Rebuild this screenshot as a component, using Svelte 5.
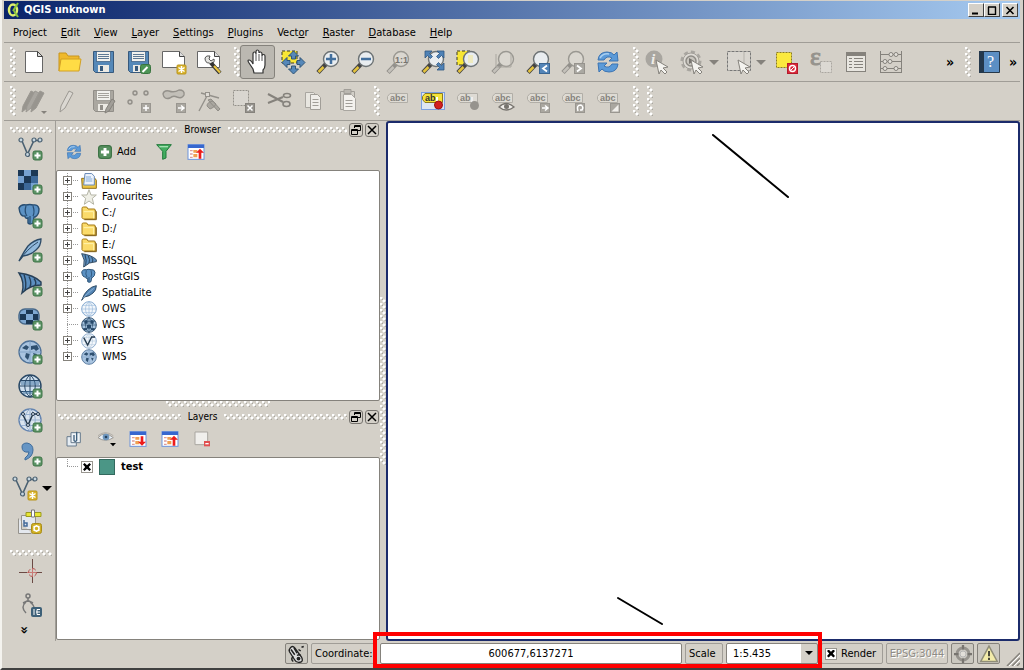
<script lang="ts">
  // Main window: title bar, menu, two toolbar rows, layer toolbar on the left,
  // Browser and Layers docks, map canvas and status bar.

  let render = $state(true);
  let testVisible = $state(true);
  let scale = $state('1:5.435');
  let coordinate = $state('600677,6137271');

  // [before, accelerator, after]
  const menus = [
    ['Pro', 'j', 'ect'],
    ['', 'E', 'dit'],
    ['', 'V', 'iew'],
    ['', 'L', 'ayer'],
    ['', 'S', 'ettings'],
    ['', 'P', 'lugins'],
    ['Vect', 'o', 'r'],
    ['', 'R', 'aster'],
    ['', 'D', 'atabase'],
    ['', 'H', 'elp'],
  ];

  const fileTools = ['new', 'open', 'save', 'save as', 'new composer', 'composer manager'];
  const navTools = [
    'pan', 'pan to selection', 'zoom in', 'zoom out', 'zoom native', 'zoom full',
    'zoom to selection', 'zoom to layer', 'zoom last', 'zoom next', 'refresh',
  ];
  const editTools = [
    'current edits', 'toggle editing', 'save edits', 'add feature', 'move feature',
    'node tool', 'delete selected', 'cut', 'copy', 'paste',
  ];
  const labelTools = [
    'labeling', 'pin labels', 'highlight pinned', 'show labels',
    'move label', 'rotate label', 'change label',
  ];
  const layerTools = [
    'add vector', 'add raster', 'add postgis', 'add spatialite', 'add mssql', 'add oracle raster',
    'add wms', 'add wcs', 'add wfs', 'add delimited text', 'new shapefile', 'layer from clipboard',
  ];

  const sources = [
    { label: 'Home', icon: 'home' },
    { label: 'Favourites', icon: 'star' },
    { label: 'C:/', icon: 'folder' },
    { label: 'D:/', icon: 'folder' },
    { label: 'E:/', icon: 'folder' },
    { label: 'MSSQL', icon: 'mssql' },
    { label: 'PostGIS', icon: 'postgis' },
    { label: 'SpatiaLite', icon: 'feather' },
    { label: 'OWS', icon: 'ows' },
    { label: 'WCS', icon: 'wcs', leaf: true },
    { label: 'WFS', icon: 'wfs' },
    { label: 'WMS', icon: 'wms' },
  ];

  // Shared icon parts, all on a 24×24 grid.
  const plus = '<rect x="15" y="15" width="9" height="9" rx="2" fill="#5b9364" stroke="#3f7548"/><path d="M19.5 16.5v6M16.5 19.5h6" stroke="#fff" stroke-width="2"/>';
  const spark = '<rect x="15" y="15" width="9" height="9" rx="1" fill="#dbb52c" stroke="#b8941c"/><path d="M19.5 16v7M16.5 17.5l6 4M16.5 21.5l6-4" stroke="#fff" stroke-width="1.5"/>';
  const lens = (inner: string, off = false) => `
    <path d="M10 14l-8 8.5" stroke="${off ? '#92908b' : '#444'}" stroke-width="4.5"/>
    <path d="M7.5 17l-5 5" stroke="${off ? '#c4c1ba' : '#e5c33c'}" stroke-width="2.5"/>
    <circle cx="15" cy="9" r="7.5" fill="${off ? '#dad7d0' : '#e9edf0'}" stroke="${off ? '#9a9892' : '#6d7375'}" stroke-width="1.4"/>${inner}`;
  const tag = (inner: string, fill = '#dedbd4', ink = '#85827c', word = 'abc') => `
    <path d="M4 4.5h17.5v9H4l-2.500-3v-3z" fill="${fill}" stroke="${ink === '#333' ? '#8a7a20' : '#b1aea7'}"/>
    <text x="4" y="12" font-family="Liberation Sans, sans-serif" font-size="9" font-weight="bold" fill="${ink}">${word}</text>${inner}`;
  const graySquare = '<rect x="14.5" y="14.5" width="9" height="9" fill="#aaa7a0" stroke="#999690"/>';
  const floppy = (body: string, edge: string) => `
    <path d="M1.5 1.5h20v21h-18l-2-2z" fill="${body}" stroke="${edge}"/>
    <rect x="4.5" y="1.5" width="14" height="10" fill="#f2f2ee" stroke="${edge}" stroke-width=".7"/>
    <path d="M6 4.5h11M6 6.5h11M6 8.5h11" stroke="${edge}" stroke-width=".8"/>
    <rect x="6" y="15" width="11" height="7" fill="#eceae4"/><rect x="8" y="16" width="3" height="5" fill="${edge}"/>`;
  const globe = (fill: string, edge: string, lines: string) => `
    <circle cx="12" cy="12" r="11" fill="${fill}" stroke="${edge}" stroke-width="1.4"/>
    <path d="M1 12h22M3 6.5h18M3 17.5h18M12 1v22M12 1C5 6 5 18 12 23M12 1c7 5 7 17 0 22" fill="none" stroke="${lines}"/>`;
  const nodes = '<path d="M4 5l5.5 13L16 4.5h6" fill="none" stroke="#4b6172" stroke-width="1.6"/><g fill="#c7d6e0" stroke="#4b6172" stroke-width="1.2"><circle cx="3" cy="4" r="2"/><circle cx="9.5" cy="18.5" r="2"/><circle cx="16" cy="4" r="2"/><circle cx="22" cy="4" r="2"/></g>';
  const elephant = '<path d="M1 4q2-4 7-3 4-1 7 0 5-1 6 4 0 6-4 8h-1l-1 6q-3 2-5 0v-5q-3 1-3-2-5 1-6-8z" fill="#5c92c4" stroke="#274d71" stroke-width="1.4"/><path d="M8 2q-2 6 1 10M15 2q2 6 0 10M12 12v7" fill="none" stroke="#274d71" stroke-width="1.2"/>';
  const sail = '<path d="M1 1q15 2 22 9v3q-11 0-19 8 3-11-3-20z" fill="#5c8fc0" stroke="#263f57" stroke-width="1.4"/><path d="M6 2.5q3 9 1 16M11 4.5q3 6 1 10.5M16 6.500q3 4 1 7" fill="none" stroke="#263f57" stroke-width="1.4"/>';
  const feather = '<path d="M1 23Q5 15 10 8 16 2 23 1q0 7-5 11-5 5-13 6z" fill="#92b9dc" stroke="#2c4a66" stroke-width="1.3"/><path d="M1 23Q9 11 20 4" fill="none" stroke="#2c4a66"/>';
  const continents = '<circle cx="12" cy="12" r="11" fill="#a9c4e0" stroke="#4f7298" stroke-width="1.3"/><path d="M4 8l4-3 3 2-2 3-3-1zM13 6l6-1 2 4-3 2-2-2-3 1zM8 13l4 1-2 6-3-3zM15 13l4 1-2 4z" fill="#2f5070"/><path d="M12 1v22M1 12h22" stroke="#7a9cc0" stroke-width=".8"/>';
  const pencil = (x: number, fill: string) => `<path d="M${x} 17L${x + 8} 2l4 2-8 15-5 4z" fill="${fill}" stroke="#9b9892"/>`;
  const pointer = '<path d="M11 10l12 7-5 1 4 4-2 2-4-4-2 4z" fill="#f4f3ef" stroke="#85827c"/>';
  const table = (arrow: string) => `
    <rect x="0" y="1" width="24" height="22" fill="#fff" stroke="#6c93dc" stroke-width="1.5"/><rect x="0" y="1" width="24" height="5" fill="#3767cf"/>
    <path d="M3 10h4M3 15h4M3 20h4" stroke="#df9c9c" stroke-width="2"/><path d="M8 9h6v4H8zM8 15h6v5H8z" fill="#f0a052"/>${arrow}`;

  const icons: Record<string, string> = {
    new: '<path d="M3.5 1.5h12l5 5v16h-17z" fill="#fff" stroke="#666"/><path d="M15.5 1.5v5h5z" fill="#ddd" stroke="#444"/>',
    open: '<path d="M2 21V3h7l2 3h11v3" fill="#efb92c" stroke="#c8951c"/><path d="M2 21L4 9h20l-2 12z" fill="#ffdc45" stroke="#d2a024"/>',
    save: floppy('#5588b8', '#37597c'),
    'save as': floppy('#5588b8', '#37597c') + '<rect x="13.5" y="14.5" width="10" height="9" rx="2" fill="#4d9455" stroke="#39743f"/><path d="M15.5 22l5-5" stroke="#fff" stroke-width="2"/>',
    'new composer': '<path d="M.5 1.5h17l5 5v11H.5z" fill="#fff" stroke="#666"/><path d="M17.5 1.5v5h5" fill="#ddd" stroke="#444"/>' + spark,
    'composer manager': '<path d="M.5 1.5h17l5 5v11H.5z" fill="#fff" stroke="#666"/><path d="M17.5 1.5v5h5" fill="#ddd" stroke="#444"/><path d="M8 8q1-3 5-2l-1 3 2 2 3-2q1 4-3 5l-2-1q-4 0-4-5z" fill="#e5e5e2" stroke="#555"/><path d="M14 13l9 10" stroke="#333" stroke-width="4"/><path d="M17 16l6 6.5" stroke="#e9c541" stroke-width="2.2"/>',
    pan: '<path d="M8 23l-1-4-4-6q-2-3 0-3t4 4V4q0-2 1.5-2T10 4V2q0-2 1.5-2T13 2v1q0-1 1.5-1T16 4v2q0-1.5 1.5-1.5T19 6v9q0 3-2 5v3z" fill="#fff" stroke="#333" stroke-width="1.2"/><path d="M10 4v7M13 4v7M16 6v5" stroke="#555"/>',
    'pan to selection': '<path d="M1 1h15v12H1z" fill="#f8e635" stroke="#3a3a20" stroke-dasharray="3 2"/><path d="M12.5 1l5 5h-3v3h-4V6h-3zM12.5 24l5-5h-3v-3h-4v3h-3zM1 12.5l5-5v3h3v4H6v3zM24 12.5l-5-5v3h-3v4h3v3z" fill="#5688b9" stroke="#315577"/>',
    'zoom in': lens('<path d="M15 4v10M10 9h10" stroke="#426f9d" stroke-width="2.5"/>'),
    'zoom out': lens('<path d="M10 9h10" stroke="#426f9d" stroke-width="2.5"/>'),
    'zoom native': lens('<text x="9" y="12.500" font-family="Liberation Sans, sans-serif" font-size="9" font-weight="bold" fill="#77746f">1:1</text>', true),
    'zoom full': lens('<path d="M4 1h7L8.5 3.5l3 3-2 2-3-3L4 8zM23 1h-7l2.5 2.5-3 3 2 2 3-3L23 8zM23 20h-7l2.5-2.5-3-3 2-2 3 3L23 13z" fill="#4f82b6" stroke="#2f5680" stroke-width=".8"/>'),
    'zoom to selection': '<path d="M1 1h13v14H1z" fill="#f8e635" stroke="#3a3a20" stroke-dasharray="3 2"/>' + lens('<path d="M12 5h5v8h-5z" fill="#eeeac0"/>'),
    'zoom to layer': lens('<path d="M5 4v13h15V4" fill="none" stroke="#aaa7a0"/>', true),
    'zoom last': lens('<rect x="13.5" y="13.5" width="10" height="10" fill="#5385b8" stroke="#3a6591"/><path d="M21 15.5l-4 3 4 3" fill="none" stroke="#fff" stroke-width="1.8"/>'),
    'zoom next': lens('<rect x="13.5" y="13.5" width="10" height="10" fill="#aaa8a2" stroke="#96938d"/><path d="M16 15.5l4 3-4 3" fill="none" stroke="#fff" stroke-width="1.8"/>', true),
    refresh: '<path d="M2 10q1-8 9-8 5 0 7 3l3-3 1 9h-9l3-3q-5-3-8 2zM22 14q-1 8-9 8-5 0-7-3l-3 3-1-9h9l-3 3q5 3 8-2z" fill="#5b9ad8" stroke="#3d74b2"/><path d="M4 8q3-5 9-4" fill="none" stroke="#a9cff0" stroke-width="1.5"/>',
    identify: '<circle cx="9" cy="9" r="8.5" fill="#a9a6a0"/><text x="6" y="14" font-family="Liberation Serif, serif" font-size="15" font-style="italic" font-weight="bold" fill="#efede8">i</text>' + pointer,
    action: '<circle cx="11" cy="11" r="9" fill="none" stroke="#a9a6a0" stroke-width="3" stroke-dasharray="4 3"/><circle cx="11" cy="11" r="8" fill="#dedbd5" stroke="#a19e98"/><circle cx="11" cy="11" r="5" fill="#c8c5be" stroke="#8f8c86" stroke-width="1.5"/><path d="M9 8l5 3-5 3z" fill="#77746f"/>' + pointer,
    select: '<path d="M.5 1.5h23v19H.5z" fill="#d9d6d0" stroke="#777" stroke-dasharray="3 1"/><path d="M17 2v18" stroke="#b5b2ab"/>' + pointer,
    deselect: '<path d="M2.5 2.5h15v15h-15z" fill="#fbe93e" stroke="#8a7c20" stroke-dasharray="2 1"/><rect x="13.5" y="13.5" width="10" height="10" fill="#d9283a" stroke="#b51a2b"/><circle cx="18.5" cy="18.5" r="3" fill="none" stroke="#fff" stroke-width="1.4"/><path d="M16.5 20.5l4-4" stroke="#fff"/>',
    expression: '<text x="1" y="15" font-family="Liberation Serif, serif" font-size="26" fill="#96938d" stroke="#96938d">ε</text><path d="M11.5 11.5h11v11h-11z" fill="#dcd9d3" stroke="#aaa7a0" stroke-dasharray="2 1"/>',
    'attribute table': '<rect x="2.5" y="2.5" width="19" height="19" fill="#e8e6e0" stroke="#85827c"/><path d="M2 4.5h20" stroke="#85827c" stroke-width="3"/><path d="M5 8.5h3M10 8.5h9M5 11.5h3M10 11.5h9M5 14.5h3M10 14.5h9M5 17.5h3M10 17.5h9" stroke="#85827c"/>',
    'field calculator': '<path d="M1.5 1v22M22.5 1v22M1 4.5h22M1 11.5h22M1 18.5h22M1 22.5h22" stroke="#85827c"/><g fill="#e4e1db" stroke="#85827c"><circle cx="12" cy="4.5" r="2"/><circle cx="17" cy="4.5" r="2"/><circle cx="6" cy="11.5" r="2"/><circle cx="11" cy="11.5" r="2"/><circle cx="6" cy="18.5" r="2"/><circle cx="17" cy="18.5" r="2"/></g>',
    help: '<path d="M2.5 1.5h20v21h-20z" fill="#5c8fc4" stroke="#26384a"/><path d="M2 1h5v22H2z" fill="#24384c"/><text x="10" y="17" font-family="Liberation Serif, serif" font-size="16" fill="#fff">?</text>',
    'current edits': pencil(1, '#98958f') + pencil(5, '#a9a6a0') + pencil(10, '#98958f') + '<path d="M19 22h6l-3 3z" fill="#85827c"/>',
    'toggle editing': pencil(4, '#dbd8d2'),
    'save edits': floppy('#aaa7a0', '#918e88') + '<path d="M14 20l6-10 3 2-6 10-4 2z" fill="#a19e98" stroke="#85827c"/>',
    'add feature': '<g fill="#cbc8c1" stroke="#918e88" stroke-width="1.4"><circle cx="8" cy="4" r="2"/><circle cx="19" cy="4" r="2"/><circle cx="3" cy="13" r="2"/></g>' + graySquare + '<path d="M19 16v6M16 19h6" stroke="#fff" stroke-width="1.5"/>',
    'move feature': '<path d="M1 5q1-4 6-3 5 2 10-1 6 0 5 5-2 4-7 2-4-2-7 1-6 2-7-4z" fill="#c2bfb8" stroke="#94918b" stroke-width="1.4"/>' + graySquare + '<path d="M16 19h5M19 16.5l3 2.5-3 2.5" fill="none" stroke="#fff" stroke-width="1.5"/>',
    'node tool': '<path d="M2 22L11 5M4 4l18 5" stroke="#94918b" stroke-width="1.4"/><rect x="8.5" y="3.5" width="4" height="4" fill="#dedbd5" stroke="#94918b"/><path d="M11 11l3-1 9 10-2 2zM10 17q0-4 6-5l3 3q-2 4-6 5z" fill="#aaa7a0" stroke="#918e88"/>',
    'delete selected': '<path d="M1.5 1.5h15v15h-15z" fill="#d9d6d0" stroke="#94918b" stroke-dasharray="2 1"/><rect x="13.5" y="14.5" width="9" height="9" fill="#96938d" stroke="#85827c"/><path d="M15.5 16.5l5 5M20.5 16.5l-5 5" stroke="#fff" stroke-width="1.5"/>',
    cut: '<path d="M1 5l15 8M1 14l15-6" stroke="#85827c" stroke-width="2"/><g fill="none" stroke="#85827c" stroke-width="1.6"><ellipse cx="20" cy="6.5" rx="3.500" ry="2"/><ellipse cx="19.500" cy="15" rx="3.500" ry="2.500"/></g>',
    copy: '<path d="M3.5 3.5h8l3 3v12h-11z" fill="#e8e6e0" stroke="#a9a6a0"/><path d="M8.500 5.5h7l3 3v12h-10z" fill="#f0eeea" stroke="#a19e98"/><path d="M10.5 10.5h6M10.5 13.5h6M10.5 16.5h6" stroke="#a19e98"/>',
    paste: '<path d="M3.5 2.5h14v18h-14z" fill="#d2cfc8" stroke="#a19e98"/><path d="M7 .5h7v4H7z" fill="#bbb8b1" stroke="#a19e98"/><path d="M6.5 5.5h8l4 4v12h-12z" fill="#f4f2ee" stroke="#a9a6a0"/><path d="M8.5 11.5h7M8.5 14.5h7M8.5 17.5h7" stroke="#a19e98"/>',
    labeling: tag(''),
    'pin labels': '<rect x=".5" y="3.5" width="23" height="17" fill="#dde5f2" stroke="#7b9fe0"/>' + tag('<path d="M16 8v8" stroke="#fff" stroke-width="2"/><circle cx="17.5" cy="16" r="4" fill="#d32020" stroke="#9c1010"/>', '#f6e338', '#333', 'ab'),
    'highlight pinned': tag('<path d="M16 8v8" stroke="#eee" stroke-width="2"/><circle cx="18.5" cy="16.5" r="4.5" fill="#96938d"/>', '#dedbd4', '#85827c', 'ab'),
    'show labels': tag('<path d="M8 18q7-7 15 0-8 6-15 0z" fill="#f0eeea" stroke="#77746f" stroke-width="1.300"/><circle cx="15.5" cy="17.500" r="2.500" fill="#77746f"/>'),
    'move label': tag(graySquare + '<path d="M16 19h5M19 16.5l3 2.5-3 2.5" fill="none" stroke="#fff" stroke-width="1.5"/>'),
    'rotate label': tag(graySquare + '<path d="M17 22q-2-6 3-6 3 2 1 5h-2" fill="none" stroke="#fff" stroke-width="1.5"/>'),
    'change label': tag(graySquare + '<path d="M15.5 22.5l7-7v7z" fill="#f0eeea"/>'),
    'add vector': nodes + plus,
    'add raster': '<path d="M0 0h20v20H0z" fill="#77a2d1"/><path d="M0 0h6v6H0zM13 0h7v6h-7zM6 6h7v7H6zM0 13h6v7H0z" fill="#1c3855"/><path d="M13 6h7v7h-7zM6 13h7v7H6z" fill="#3d6999"/>' + plus,
    'add postgis': elephant + plus,
    'add spatialite': feather + plus,
    'add mssql': sail + plus,
    'add oracle raster': '<rect x="1" y="3" width="20" height="15" rx="6" fill="#7fa8d2" stroke="#49698a" stroke-width="1.500"/><path d="M8 4h7v4H8zM2 8h6v6H2zM15 8h5v6h-5zM8 14h7v4H8z" fill="#1c3855"/>' + plus,
    'add wms': continents + plus,
    'add wcs': globe('#cfe0ef', '#294866', '#294866') + '<path d="M3 7h18v4H3zM5 17h14v3H5z" fill="#42719e" opacity=".5"/>' + plus,
    'add wfs': globe('#dae4ee', '#6585b0', '#98b1d1') + '<path d="M5 7l5 10 5-11h5" fill="none" stroke="#24394d" stroke-width="1.5"/><g fill="#dae4ee" stroke="#24394d"><circle cx="5" cy="6" r="1.5"/><circle cx="10" cy="17" r="1.5"/><circle cx="15" cy="6" r="1.5"/><circle cx="20" cy="6" r="1.500"/></g>' + plus,
    'add delimited text': '<path d="M4 5q0-4 5-4 6 1 6 7 0 7-8 10v-2q4-3 4-6-7 1-7-5z" fill="#6695c4" stroke="#3f6c9b"/>' + plus,
    'new shapefile': '<path d="M-2 4l6.5 14L11 3.5h6" fill="none" stroke="#4b6172" stroke-width="1.6"/><g fill="#c7d6e0" stroke="#4b6172" stroke-width="1.2"><circle cx="-3" cy="3" r="2"/><circle cx="4.5" cy="18" r="2"/><circle cx="11" cy="3" r="2"/><circle cx="17" cy="3" r="2"/></g><g transform="translate(-5 0)">' + spark + '</g>',
    'layer from clipboard': '<path d="M.5 8.5v15h13M3.5 5.5h14v14h-14z" fill="#e4e8ee" stroke="#96938d"/><path d="M6 10v6h3v-3H6" fill="none" stroke="#466b9a" stroke-width="1.5"/><path d="M8 2.5h15v4H8z" fill="#e7e535" stroke="#9b9a20"/><path d="M13.5 0h3v7h-3z" fill="#fff" stroke="#777"/><rect x="13.5" y="13.5" width="10" height="10" rx="2" fill="#d1b024" stroke="#a88c18"/><path d="M18.5 15v7M15.500 16.500l6 4M15.500 20.500l6-4" stroke="#fff"/><circle cx="18.5" cy="18.500" r="2.5" fill="#d1b024" stroke="#fff" stroke-width="1.5"/>',
    crosshair: '<path d="M14.5 0v9M14.5 16v8M1 13.5h8M19 13.5h5" stroke="#6b4a44"/><path d="M9 13.5h10M14.5 9v9" stroke="#c97a76"/><circle cx="14.5" cy="13.5" r="4" fill="none" stroke="#b2504c" stroke-dasharray="4 2"/>',
    measure: '<circle cx="10" cy="3" r="2" fill="none" stroke="#777" stroke-width="1.5"/><path d="M10 5v4M5 10l4-2h2l4 2M8 9q-6 5 0 11M12 9q4 3 4 6" fill="none" stroke="#777" stroke-width="1.5"/><rect x="13" y="14" width="11" height="10" rx="2" fill="#3d6078"/><path d="M16 16v6M22 16.5h-3v5h3M18 19h4" fill="none" stroke="#fff"/>',
    'browse add': '<rect x="1" y="1" width="22" height="22" rx="5" fill="#57905f" stroke="#3e7346" stroke-width="2"/><path d="M12 5v14M5 12h14" stroke="#fff" stroke-width="5"/>',
    filter: '<path d="M1 1h22l-8 10v10l-5 2V11z" fill="#43ad61" stroke="#217a3b" stroke-width="1.5"/><path d="M5 4h13" stroke="#a6e1b3" stroke-width="2"/>',
    collapse: table('<path d="M18 7l6 6h-4v9h-4v-9h-4z" fill="#ed1b1b"/>'),
    expand: table('<path d="M18 22l6-6h-4V8h-4v8h-4z" fill="#ed1b1b"/>'),
    'add group': '<path d="M1.5 8.5v14h14V8.500z" fill="#e6edf3" stroke="#687b8d" stroke-width="1.500"/><path d="M7.5 2.5h14v15h-14z" fill="#eef3f7" stroke="#687b8d" stroke-width="1.500"/><path d="M12 6v8q2 3 4 0V1" fill="none" stroke="#41617e" stroke-width="2"/>',
    visibility: '<path d="M0 10q10-11 23 0-12 8-23 0z" fill="#e5eef7" stroke="#9d9a95" stroke-width="1.5"/><path d="M0 7q11-9 23 0" fill="none" stroke="#9d9a95"/><circle cx="12" cy="9" r="5" fill="#6e96bd"/><circle cx="12" cy="9" r="2" fill="#27435f"/><path d="M18 18h9l-4.5 5z" fill="#000"/>',
    remove: '<path d="M1.5 1.5h19v19h-19z" fill="#f0efec" stroke="#a9a6a0" stroke-width="1.5"/><path d="M15 15h9v8h-9z" fill="#e05050"/><path d="M17 19h5" stroke="#fff" stroke-width="2"/>',
    folder: '<path d="M1.5 5q0-2 2-2h5l2 3h9q2 0 2 2v13H3.5l-2-2z" fill="#fbdb6a" stroke="#a37915" stroke-width="1.5"/><path d="M4 10h15v10" fill="none" stroke="#fff3b0" stroke-width="1.5"/><path d="M21 8l2 2v12H5" fill="none" stroke="#7d5c10" stroke-width="1.5"/>',
    home: '<path d="M1 8h20l2 3v12H2z" fill="#efc641" stroke="#91701c" stroke-width="1.5"/><path d="M6 .8h10l4 4V18H4z" fill="#edf3fc" stroke="#698bb8" stroke-width="1.5"/><path d="M7 6h8M7 9h10M7 12h10" stroke="#83acd8" stroke-width="1.5"/>',
    star: '<path d="M12 1l3 8h8l-6 5 2 9-7-5-7 5 2-9-6-5h8z" fill="#efefe6" stroke="#b5b5a6" stroke-width="1.5"/>',
    mssql: sail,
    postgis: elephant,
    feather: '<path d="M1 23Q5 12 10 8 16 2 23 1q0 7-5 11-5 5-13 6z" fill="#5587b7" stroke="#2c4a66" stroke-width="1.5"/><path d="M3 20Q10 12 19 5" stroke="#a9c9e6" fill="none"/>',
    ows: globe('#f3f7fb', '#7ea5cd', '#9bbbdc'),
    wcs: globe('#a8c6e2', '#294866', '#294866') + '<path d="M5 5h5v5H5zM14 5h5v5h-5zM9 12h6v5H9zM4 17h5v3H4zM15 17h5v3h-5z" fill="#274869"/>',
    wfs: globe('#f3f7fb', '#8aa9cb', '#b6cbe0') + '<path d="M4 7l6 11 6-12h5" fill="none" stroke="#24394d" stroke-width="2"/>',
    wms: continents,
    mouse: '<path d="M3 4q3-4 6 0l9 12q3 6-2 7-5 1-7-3L2 9q-1-3 1-5z" fill="#ddd" stroke="#222" stroke-width="1.8"/><path d="M4 6l5 7M8 4l4 7M12 14q3-2 5 0M14 6l3 2M18 3l3-1M7 15q-4 4 0 7" fill="none" stroke="#222" stroke-width="2"/><circle cx="14" cy="18" r="2.5" fill="#222"/>',
    crs: '<circle cx="12" cy="12" r="8" fill="#d0cdc7" stroke="#96938d" stroke-width="4"/><path d="M12 0v6M12 18v6M0 12h6M18 12h6" stroke="#77746f" stroke-width="3"/><circle cx="12" cy="12" r="4" fill="#e2dfd9" stroke="#aaa"/>',
    warning: '<path d="M12 1.5L23 22H1z" fill="#f3ecaa" stroke="#8f8d78" stroke-width="2"/><path d="M12 8v7M12 17v3" stroke="#3f3f35" stroke-width="2.5"/>',
  };
</script>

<svelte:head>
  <title>QGIS unknown</title>
</svelte:head>

{#snippet icon(name: string, size = 24)}
  <svg class="icon" width={size} height={size} viewBox="0 0 24 24" aria-hidden="true">{@html icons[name]}</svg>
{/snippet}

{#snippet tool(name: string)}
  <button class="tool" class:pressed={name === 'pan'} aria-label={name}>{@render icon(name)}</button>
{/snippet}

{#snippet drop(label: string)}
  <button class="drop" aria-label={label}></button>
{/snippet}

{#snippet dockTitle(title: string)}
  <header class="dock-title">
    <span class="grip-h"></span>
    <h2>{title}</h2>
    <span class="grip-h"></span>
    <button aria-label="Float {title}">
      <svg width="10" height="10" viewBox="0 0 10 10"><path d="M3.5 3V.5h6v5H7M3 1.500h7M.5 4.500h6v5h-6zM0 5.500h7" fill="none" stroke="#000" /></svg>
    </button>
    <button aria-label="Close {title}">
      <svg width="10" height="10" viewBox="0 0 10 10"><path d="M1 1l8 8M9 1l-8 8" stroke="#000" stroke-width="1.500" /></svg>
    </button>
  </header>
{/snippet}

<div class="window">
  <header class="titlebar">
    <svg width="16" height="16" viewBox="0 0 16 16" aria-hidden="true">
      <ellipse cx="7" cy="8" rx="4" ry="5.500" fill="none" stroke="#dff06c" stroke-width="2.500" />
      <path d="M8 9l4 6M7 9l5-8" stroke="#8ac43c" stroke-width="2" />
    </svg>
    <h1>QGIS unknown</h1>
    <div class="caption-buttons">
      <button aria-label="Minimize"><svg width="10" height="9"><path d="M1 7.500h6" stroke="#000" stroke-width="2" /></svg></button>
      <button aria-label="Maximize"><svg width="10" height="9"><path d="M1 1h8M1.500 1v7.500h7V1" fill="none" stroke="#000" stroke-width="1.400" /></svg></button>
      <button class="close" aria-label="Close"><svg width="10" height="9"><path d="M1.500 1l7 7M8.500 1l-7 7" stroke="#000" stroke-width="1.600" /></svg></button>
    </div>
  </header>

  <nav class="menubar">
    {#each menus as [before, key, after]}
      <button>{before}<u>{key}</u>{after}</button>
    {/each}
  </nav>

  <div class="toolbar">
    <span class="grip-v"></span>
    {#each fileTools as name}{@render tool(name)}{/each}
    <span class="grip-v"></span>
    {#each navTools as name}{@render tool(name)}{/each}
    <span class="grip-v"></span>
    {@render tool('identify')}
    {@render tool('action')}
    {@render drop('Actions')}
    {@render tool('select')}
    {@render drop('Selection tools')}
    {@render tool('deselect')}
    {@render tool('expression')}
    {@render tool('attribute table')}
    {@render tool('field calculator')}
    <span class="spacer"></span>
    <button class="more" aria-label="More tools">»</button>
    <span class="grip-v"></span>
    {@render tool('help')}
    <button class="more" aria-label="More help">»</button>
  </div>

  <div class="toolbar">
    <span class="grip-v"></span>
    {#each editTools as name}{@render tool(name)}{/each}
    <span class="grip-v"></span>
    {#each labelTools as name}{@render tool(name)}{/each}
    <span class="grip-v"></span>
    <span class="grip-v"></span>
  </div>

  <main>
    <div class="side-tools">
      <span class="grip-h"></span>
      {#each layerTools as name}
        <div class="side-row">
          <button class="side" aria-label={name}>{@render icon(name)}</button>
          {#if name === 'new shapefile'}<button class="side-drop" aria-label="New layer menu"></button>{/if}
        </div>
      {/each}
      <span class="grip-h second"></span>
      <button class="side" aria-label="Coordinate capture">{@render icon('crosshair')}</button>
      <button class="side" aria-label="Measure">{@render icon('measure')}</button>
      <button class="more down" aria-label="More layer tools">»</button>
    </div>

    <div class="docks">
      <section class="dock browser">
        {@render dockTitle('Browser')}
        <div class="dock-tools">
          <button aria-label="Refresh">{@render icon('refresh', 16)}</button>
          <button class="add">{@render icon('browse add', 14)}Add</button>
          <button aria-label="Filter">{@render icon('filter', 16)}</button>
          <button aria-label="Collapse all">{@render icon('collapse', 16)}</button>
        </div>
        <ul class="tree">
          {#each sources as s}
            <li>
              <span class="branch">
                {#if !s.leaf}<button class="expander" aria-label="Expand {s.label}"></button>{/if}
              </span>
              {@render icon(s.icon, 16)}
              <span>{s.label}</span>
            </li>
          {/each}
        </ul>
      </section>

      <div class="splitter"><span class="grip-h"></span></div>

      <section class="dock layers">
        {@render dockTitle('Layers')}
        <div class="dock-tools">
          <button aria-label="Add group">{@render icon('add group', 16)}</button>
          <button aria-label="Manage visibility">{@render icon('visibility', 16)}</button>
          <button aria-label="Expand all">{@render icon('expand', 16)}</button>
          <button aria-label="Collapse all layers">{@render icon('collapse', 16)}</button>
          <button aria-label="Remove layer">{@render icon('remove', 16)}</button>
        </div>
        <ul class="tree layer-tree">
          <li>
            <span class="branch last"></span>
            <input id="layer-test" type="checkbox" bind:checked={testVisible} />
            <span class="swatch"></span>
            <label for="layer-test">test</label>
          </li>
        </ul>
      </section>
    </div>

    <div class="v-splitter"><span class="grip-v"></span></div>

    <section class="canvas" aria-label="Map canvas">
      <svg width="100%" height="100%">
        {#if render && testVisible}
          <g stroke="#000" stroke-width="2" stroke-linecap="round">
            <line x1="325" y1="12" x2="400" y2="74" />
            <line x1="230" y1="475" x2="274" y2="501" />
          </g>
        {/if}
      </svg>
    </section>
  </main>

  <footer class="status">
    <button class="panel square" aria-label="Toggle extents">{@render icon('mouse', 18)}</button>
    <label class="panel coord-label" for="coordinate">Coordinate:</label>
    <div class="highlighted">
      <input id="coordinate" type="text" bind:value={coordinate} />
      <label class="panel" for="scale">Scale</label>
      <span class="combo">
        <select id="scale" bind:value={scale}>
          <option>1:5.435</option>
          <option>1:10.000</option>
          <option>1:25.000</option>
        </select>
      </span>
    </div>
    <label class="panel render"><input type="checkbox" bind:checked={render} />Render</label>
    <button class="panel epsg">EPSG:3044</button>
    <button class="panel square" aria-label="CRS status">{@render icon('crs', 18)}</button>
    <button class="panel square" aria-label="Messages">{@render icon('warning', 18)}</button>
    <svg class="size-grip" width="14" height="14" aria-hidden="true">
      <path d="M1 14L14 1M6 14l8-8M11 14l3-3" stroke="#85827c" stroke-width="1.500" />
      <path d="M3 14L14 3M8 14l6-6" stroke="#fff" />
    </svg>
  </footer>
</div>

<style>
  :global(body) {
    margin: 0;
    background: #d4d0c8;
  }

  .window {
    display: flex;
    flex-direction: column;
    box-sizing: border-box;
    min-height: 100vh;
    padding: 1px 3px 0 2px;
    border-left: 2px solid #f4f3ef;
    border-right: 1px solid #404040;
    border-bottom: 2px solid #404040;
    background: #d4d0c8;
    color: #000;
    font-family: 'DejaVu Sans Condensed', Tahoma, 'Noto Sans', sans-serif;
    font-size: 11px;
    line-height: 16px;
  }

  button, input, select {
    box-sizing: border-box;
    margin: 0;
    padding: 0;
    border: 0;
    background: none;
    color: inherit;
    font: inherit;
  }
  .icon {
    display: block;
    flex: none;
    overflow: visible;
  }
  h1, h2 {
    margin: 0;
    font-size: inherit;
    font-weight: normal;
  }

  /* Title bar */
  .titlebar {
    display: flex;
    align-items: center;
    gap: 2px;
    height: 18px;
    padding: 0 2px;
    background: linear-gradient(90deg, #0a246a, #a6caf0);
    color: #fff;
  }
  .titlebar h1 {
    flex: 1;
    font-weight: bold;
  }
  .caption-buttons {
    display: flex;
  }
  .caption-buttons button {
    display: flex;
    align-items: center;
    justify-content: center;
    width: 16px;
    height: 14px;
    border: 1px solid;
    border-color: #fff #404040 #404040 #fff;
    background: #d4d0c8;
  }
  .caption-buttons .close {
    margin-left: 2px;
  }

  .menubar {
    display: flex;
    height: 23px;
    padding-left: 2px;
    border-bottom: 1px solid #a09d97;
  }
  .menubar button {
    padding: 4px 7px 0;
  }

  /* Toolbars */
  .toolbar {
    display: flex;
    align-items: center;
    height: 38px;
    border-bottom: 1px solid #a09d97;
  }
  .tool {
    display: flex;
    align-items: center;
    justify-content: center;
    flex: none;
    width: 35px;
    height: 34px;
  }
  .tool.pressed {
    border: 1px solid #85827c;
    border-radius: 3px;
    background: #bbb8b1;
  }
  .drop {
    width: 12px;
    height: 34px;
  }
  .drop::before, .side-drop::before {
    content: '';
    display: block;
    width: 0;
    border: 5px solid transparent;
    border-top-color: #85827c;
    border-bottom: 0;
  }
  .spacer {
    flex: 1;
  }
  .more {
    width: 14px;
    font-size: 14px;
    font-weight: bold;
  }
  .grip-v, .grip-h {
    flex: none;
    background-image:
      radial-gradient(circle at 1px 1px, #fff 1px, transparent 2px),
      radial-gradient(circle at 4px 4px, #fff 1px, transparent 2px),
      radial-gradient(circle at 2px 2px, #aaa79f 1px, transparent 1px),
      radial-gradient(circle at 5px 5px, #aaa79f 1px, transparent 1px);
    background-size: 6px 6px;
  }
  .grip-v {
    width: 6px;
    height: 30px;
    margin-left: 8px;
  }
  .grip-v:first-child {
    margin-left: 6px;
  }
  .grip-h {
    height: 6px;
  }

  main {
    display: flex;
    flex: 1;
  }

  /* Layer toolbar */
  .side-tools {
    display: flex;
    flex-direction: column;
    align-items: flex-start;
    width: 51px;
    border-right: 1px solid #a09d97;
  }
  .side-tools .grip-h {
    width: 42px;
    margin: 6px 0 -2px 6px;
  }
  .side-tools .second {
    margin-top: 11px;
  }
  .side-row {
    display: flex;
    align-items: center;
  }
  .side {
    display: flex;
    align-items: center;
    justify-content: center;
    width: 36px;
    height: 34px;
    margin-left: 8px;
  }
  .side-drop {
    width: 10px;
    margin-left: -6px;
  }
  .side-drop::before {
    border-top-color: #000;
  }
  .down {
    margin-left: 14px;
    transform: rotate(90deg);
  }

  /* Docks */
  .docks {
    display: flex;
    flex-direction: column;
    width: 324px;
    padding-bottom: 1px;
  }
  .dock {
    display: flex;
    flex-direction: column;
  }
  .browser {
    flex: 280;
  }
  .layers {
    flex: 232;
  }
  .dock-title {
    display: flex;
    align-items: center;
    gap: 2px;
    height: 15px;
    padding: 1px 1px 0 2px;
  }
  .dock-title .grip-h {
    flex: 1;
  }
  .dock-title h2 {
    padding: 0 5px;
    font-size: 10px;
  }
  .dock-title button {
    display: flex;
    align-items: center;
    justify-content: center;
    width: 14px;
    height: 14px;
    border: 1px solid #77746f;
    border-radius: 3px;
  }
  .dock-tools {
    display: flex;
    align-items: center;
    gap: 16px;
    height: 29px;
    padding: 0 0 4px 10px;
  }
  .dock-tools .add {
    display: flex;
    align-items: center;
    gap: 5px;
    margin-right: 4px;
  }

  .tree {
    flex: 1;
    margin: 0;
    padding: 2px 0 0 5px;
    border: 1px solid #85827c;
    border-radius: 2px;
    background: #fff;
    list-style: none;
  }
  .tree li {
    display: flex;
    align-items: center;
    height: 16px;
  }
  .tree li > .icon {
    margin-right: 5px;
  }
  /* dotted trunk with a stub towards the icon */
  .branch {
    display: flex;
    align-items: center;
    width: 19px;
    height: 16px;
    background:
      repeating-linear-gradient(180deg, #999 0 1px, transparent 1px 2px) 5px 0 / 1px 100% no-repeat,
      repeating-linear-gradient(90deg, #999 0 1px, transparent 1px 2px) 5px 7px / 11px 1px no-repeat;
  }
  .tree li:last-child .branch {
    background-size: 1px 8px, 11px 1px;
  }
  .expander {
    width: 9px;
    height: 9px;
    margin: 0 0 1px 1px;
    border: 1px solid #85827c;
    background:
      linear-gradient(#444, #444) center / 5px 1px no-repeat,
      linear-gradient(#444, #444) center / 1px 5px no-repeat,
      #fff;
  }

  input[type='checkbox'] {
    display: flex;
    flex: none;
    width: 12px;
    height: 12px;
    appearance: none;
    border: 1px solid #999690;
    background: #fff;
  }
  input[type='checkbox']:checked::before {
    content: '';
    flex: 1;
    margin: 1px;
    background: #000;
    clip-path: polygon(0 20%, 20% 0, 50% 28%, 80% 0, 100% 20%, 72% 50%, 100% 80%, 80% 100%, 50% 72%, 20% 100%, 0 80%, 28% 50%);
  }
  .layer-tree {
    padding-top: 0;
  }
  .layer-tree li {
    height: 18px;
    font-weight: bold;
  }
  .layer-tree .swatch {
    box-sizing: border-box;
    width: 16px;
    height: 16px;
    margin: 0 6px;
    border: 1px solid #33695e;
    background: #4b9686;
  }

  .splitter {
    display: flex;
    justify-content: center;
    height: 7px;
  }
  .splitter .grip-h {
    width: 104px;
  }
  .v-splitter {
    display: flex;
    align-items: center;
    width: 6px;
  }
  .v-splitter .grip-v {
    height: 168px;
    margin: 0;
  }

  .canvas {
    flex: 1;
    min-height: 514px;
    border: 2px solid #1b2b6b;
    border-radius: 3px;
    background: #fff;
  }
  .canvas svg {
    display: block;
  }

  /* Status bar */
  .status {
    display: flex;
    align-items: center;
    justify-content: flex-end;
    gap: 3px;
    box-sizing: border-box;
    height: 27px;
    padding-bottom: 2px;
  }
  .panel {
    display: flex;
    align-items: center;
    box-sizing: border-box;
    height: 21px;
    padding: 0 3px;
    border: 1px solid #a09d97;
    border-radius: 2px;
    white-space: nowrap;
  }
  .square {
    justify-content: center;
    width: 23px;
    padding: 0;
    border-color: #85827c;
    background: #cbc8c0;
  }
  .coord-label {
    width: 66px;
  }
  .highlighted {
    position: relative;
    display: flex;
    align-items: center;
    gap: 3px;
  }
  .highlighted::after {
    content: '';
    position: absolute;
    inset: -11px -4px -4px -7px;
    border: 4px solid #f00;
    pointer-events: none;
  }
  .highlighted input {
    width: 302px;
    height: 21px;
    border: 1px solid #85827c;
    border-radius: 2px;
    background: #fff;
    text-align: center;
  }
  .highlighted .panel {
    width: 38px;
  }
  .combo {
    position: relative;
  }
  .combo::after {
    content: '';
    position: absolute;
    top: 8px;
    right: 5px;
    border: 4px solid transparent;
    border-top-color: #000;
    border-bottom: 0;
    pointer-events: none;
  }
  .combo select {
    display: block;
    width: 92px;
    height: 21px;
    padding-left: 6px;
    appearance: none;
    border: 1px solid #85827c;
    border-radius: 2px;
    background: linear-gradient(#d4d0c8, #d4d0c8) right / 16px 100% no-repeat #fff;
  }
  .render {
    gap: 4px;
    width: 62px;
  }
  .epsg {
    justify-content: center;
    width: 62px;
    color: #8f8c86;
    text-shadow: 1px 1px #fff;
  }
  .size-grip {
    align-self: flex-end;
    margin-left: 3px;
  }
</style>
